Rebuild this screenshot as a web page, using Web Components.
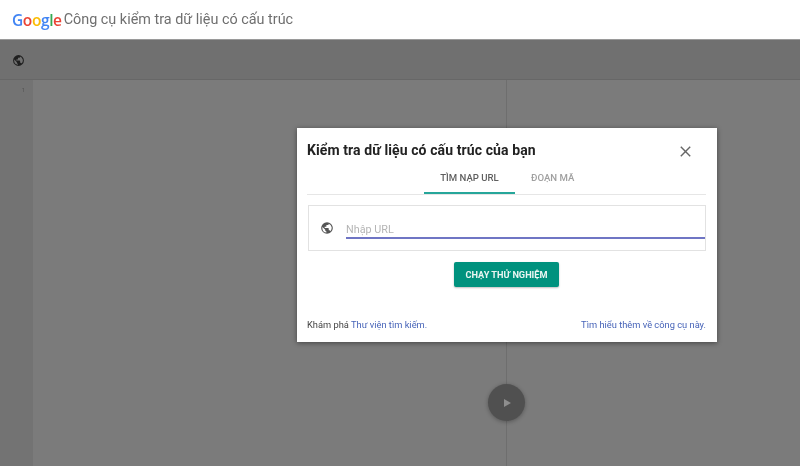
<!DOCTYPE html>
<html lang="vi">
<head>
<meta charset="utf-8">
<title>Công cụ kiểm tra dữ liệu có cấu trúc</title>
<style>
  html, body { margin: 0; height: 100%; overflow: hidden; }
  body { font-family: Roboto, "Liberation Sans", sans-serif; background: #7b7b7b; }
  a { color: #4663b8; }
</style>
</head>
<body>
<tool-page>
  <app-header slot="header">Công cụ kiểm tra dữ liệu có cấu trúc</app-header>
  <test-dialog slot="dialog">
    <span slot="title">Kiểm tra dữ liệu có cấu trúc của bạn</span>
    <span slot="left">Khám phá <a>Thư viện tìm kiếm.</a></span>
    <a slot="right">Tìm hiểu thêm về công cụ này.</a>
  </test-dialog>
</tool-page>

<script>
const GLOBE = `<svg viewBox="0 0 24 24" width="100%" height="100%" fill="currentColor"><path d="M12 2a10 10 0 1 0 0 20 10 10 0 0 0 0-20zM4 12c0-.6.1-1.200.2-1.800L9 15v1c0 1.100.9 2 2 2v1.900A8 8 0 0 1 4 12zm13.900 5.400c-.3-.8-1-1.400-1.900-1.400h-1v-3c0-.6-.4-1-1-1H8v-2h2c.6 0 1-.4 1-1V7h2c1.100 0 2-.9 2-2v-.4a8 8 0 0 1 2.900 12.800z"/></svg>`;

class AppHeader extends HTMLElement {
  constructor() {
    super();
    this.attachShadow({ mode: "open" });
    this.shadowRoot.innerHTML = `
      <style>
        :host { display: flex; align-items: center; height: 39px; background: #fff; border-bottom: 1px solid #9a9a9a; padding-left: 12px; gap: 2px; color: #6f6f6f; font-size: 14.4px; }
        .logo { font-family: "Open Sans", "Liberation Sans", sans-serif; font-weight: 600; font-size: 15.5px; letter-spacing: -.4px; }
        .b { color: #4285f4; } .r { color: #ea4335; } .y { color: #fbbc05; } .g { color: #34a853; }
      </style>
      <span class="logo"><span class="b">G</span><span class="r">o</span><span class="y">o</span><span class="b">g</span><span class="g">l</span><span class="r">e</span></span>
      <slot></slot>`;
  }
}

class TestDialog extends HTMLElement {
  constructor() {
    super();
    this.attachShadow({ mode: "open" });
    this.shadowRoot.innerHTML = `
      <style>
        :host { display: flex; flex-direction: column; position: absolute; left: 297px; top: 128px; width: 420px; height: 214px; box-sizing: border-box; padding: 0 11px 0 10px; background: #fff; box-shadow: 0 1px 5px rgba(0,0,0,.45); color: #333; }
        .top { display: flex; justify-content: space-between; align-items: center; height: 44px; }
        .title { font-size: 14px; font-weight: 700; color: #222; letter-spacing: .1px; margin-top: -1px; }
        .close { width: 11px; height: 11px; margin-right: 15px; margin-top: 3px; color: #666; }
        .tabs { display: flex; height: 22px; border-bottom: 1px solid #e6e6e6; font-size: 9.6px; font-weight: 500; padding-left: 117px; }
        .tab { line-height: 12px; box-sizing: border-box; color: #a0a0a0; }
        .tab.on { width: 91px; height: 22px; text-align: center; color: #5f5f5f; border-bottom: 2px solid #26a69a; }
        .tab.off { margin-left: 16px; }
        .box { display: flex; align-items: center; height: 46px; margin-top: 10px; border: 1px solid #e2e2e2; margin-left: 1px; box-sizing: border-box; padding-left: 11px; }
        .globe { width: 14px; height: 14px; color: #555; margin-right: 12px; margin-top: -2px; }
        .input { flex: 1; height: 15px; margin-top: 4px; border-bottom: 2px solid #6f75c4; color: #b5b5b5; font-size: 10.800px; line-height: 15px; }
        .run { align-self: center; margin-top: 11px; width: 105px; height: 25px; display: flex; align-items: center; justify-content: center; background: #00927e; color: #e9f5f2; border-radius: 2px; font-size: 9.2px; font-weight: 700; box-shadow: 0 1px 2px rgba(0,0,0,.25); }
        .foot { margin-top: auto; margin-bottom: 11px; display: flex; justify-content: space-between; font-size: 9.3px; line-height: 12px; color: #444; }
      </style>
      <div class="top">
        <div class="title"><slot name="title"></slot></div>
        <svg class="close" viewBox="0 0 14 14" fill="none" stroke="currentColor" stroke-width="1.800"><path d="M1 1l12 12M13 1L1 13"/></svg>
      </div>
      <div class="tabs">
        <div class="tab on">TÌM NẠP URL</div>
        <div class="tab off">ĐOẠN MÃ</div>
      </div>
      <div class="box">
        <div class="globe">${GLOBE}</div>
        <div class="input">Nhập URL</div>
      </div>
      <div class="run">CHẠY THỬ NGHIỆM</div>
      <div class="foot"><slot name="left"></slot><slot name="right"></slot></div>`;
  }
}

class ToolPage extends HTMLElement {
  constructor() {
    super();
    this.attachShadow({ mode: "open" });
    this.shadowRoot.innerHTML = `
      <style>
        :host { display: flex; flex-direction: column; height: 466px; position: relative; filter: blur(.35px); }
        .bar { display: flex; align-items: center; height: 40px; box-sizing: border-box; background: #707070; border-bottom: 1px solid #676767; padding-left: 12px; }
        .bar div { width: 13px; height: 13px; color: #1f1f1f; margin-bottom: 2px; }
        .editor { flex: 1; display: flex; }
        .gutter { width: 33px; background: #737373; color: #555; font-size: 6px; text-align: right; box-sizing: border-box; padding: 6px 8px 0 0; }
        .left { width: 473px; background: #7b7b7b; border-right: 1px solid #6e6e6e; }
        .right { flex: 1; background: #7b7b7b; }
        .play { position: absolute; left: 488px; top: 384px; width: 37px; height: 37px; border-radius: 50%; background: #505050; box-shadow: 0 1px 4px rgba(0,0,0,.3); display: flex; align-items: center; justify-content: center; }
        .play i { width: 0; height: 0; border-left: 7px solid #8e8e8e; border-top: 4.500px solid transparent; border-bottom: 4.500px solid transparent; margin-left: 2px; }
      </style>
      <slot name="header"></slot>
      <div class="bar"><div>${GLOBE}</div></div>
      <div class="editor">
        <div class="gutter">1</div>
        <div class="left"></div>
        <div class="right"></div>
      </div>
      <div class="play"><i></i></div>
      <slot name="dialog"></slot>`;
  }
}

customElements.define("app-header", AppHeader);
customElements.define("test-dialog", TestDialog);
customElements.define("tool-page", ToolPage);
</script>
</body>
</html>
